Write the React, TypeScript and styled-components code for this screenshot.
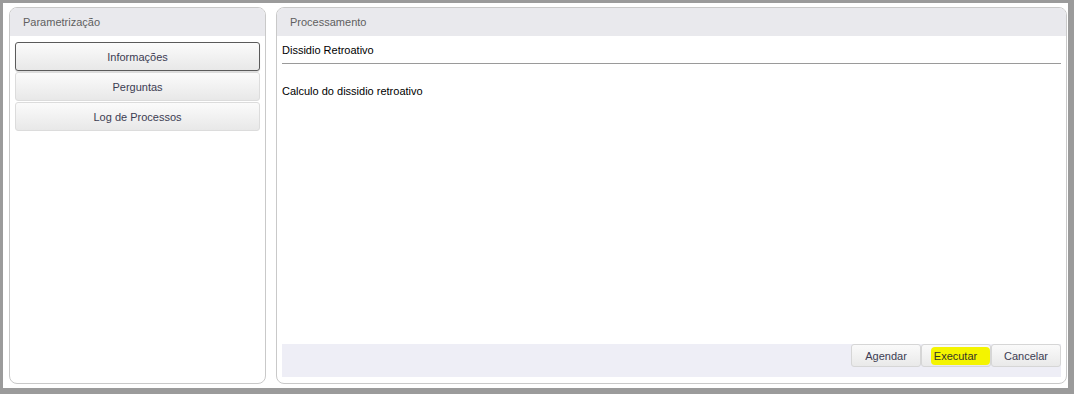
import React from "react";
import styled, { createGlobalStyle } from "styled-components";

const GlobalStyle = createGlobalStyle`
  body {
    margin: 0;
    background: #9b9b9b;
    font-family: "Liberation Sans", Arial, sans-serif;
  }
`;

const Frame = styled.div`
  width: 1074px;
  height: 394px;
  box-sizing: border-box;
  padding: 3px 6px 6px 3px;
  background: #9b9b9b;
`;

const Window = styled.div`
  height: 100%;
  box-sizing: border-box;
  background: #fff;
  padding: 4px 1px 4px 6px;
  display: flex;
  gap: 10px;
`;

const Panel = styled.div<{ width: number }>`
  width: ${(p) => p.width}px;
  box-sizing: border-box;
  border: 1px solid #c9c9c9;
  border-radius: 8px;
  display: flex;
  flex-direction: column;
  overflow: hidden;
`;

const PanelHeader = styled.div`
  height: 28px;
  flex-shrink: 0;
  background: #e9e9ed;
  display: flex;
  align-items: center;
  padding-left: 13px;
  font-size: 11px;
  color: #5f5f5f;
`;

const MenuList = styled.div`
  display: flex;
  flex-direction: column;
  gap: 1px;
  padding: 6px 5px 0 5px;
`;

const MenuButton = styled.div<{ active?: boolean }>`
  height: 29px;
  box-sizing: border-box;
  border: 1px solid ${(p) => (p.active ? "#5a5a5a" : "#dcdcdc")};
  border-radius: 3px;
  background: linear-gradient(#fbfbfb, #e8e8e8);
  display: flex;
  align-items: center;
  justify-content: center;
  font-size: 11px;
  color: #3c3c52;
  box-shadow: ${(p) => (p.active ? "0 1px 1px rgba(0,0,0,0.15)" : "none")};
`;

const Content = styled.div`
  flex: 1;
  display: flex;
  flex-direction: column;
  padding: 0 5px 6px 5px;
`;

const Title = styled.div`
  font-size: 11px;
  color: #000;
  padding-top: 8px;
  height: 19px;
  border-bottom: 1px solid #9a9a9a;
`;

const Description = styled.div`
  flex: 1;
  font-size: 11px;
  color: #000;
  padding-top: 21px;
`;

const Footer = styled.div`
  height: 33px;
  background: #eeeef6;
  display: flex;
  justify-content: flex-end;
  align-items: flex-start;
`;

const ActionButton = styled.div`
  width: 70px;
  height: 23px;
  box-sizing: border-box;
  border: 1px solid #d6d6d6;
  border-radius: 3px;
  background: linear-gradient(#fafafa, #e9e9e9);
  display: flex;
  align-items: center;
  justify-content: center;
  font-size: 11px;
  color: #3c3c52;
`;

const Highlight = styled.span`
  background: #f4f400;
  border-radius: 4px;
  padding: 3px 13px 3px 3px;
  margin-left: 9px;
  color: #33332a;
`;

export default function App() {
  return (
    <>
      <GlobalStyle />
      <Frame>
        <Window>
          <Panel width={257}>
            <PanelHeader>Parametrização</PanelHeader>
            <MenuList>
              <MenuButton active>Informações</MenuButton>
              <MenuButton>Perguntas</MenuButton>
              <MenuButton>Log de Processos</MenuButton>
            </MenuList>
          </Panel>
          <Panel width={791}>
            <PanelHeader>Processamento</PanelHeader>
            <Content>
              <Title>Dissidio Retroativo</Title>
              <Description>Calculo do dissidio retroativo</Description>
              <Footer>
                <ActionButton>Agendar</ActionButton>
                <ActionButton>
                  <Highlight>Executar</Highlight>
                </ActionButton>
                <ActionButton>Cancelar</ActionButton>
              </Footer>
            </Content>
          </Panel>
        </Window>
      </Frame>
    </>
  );
}
